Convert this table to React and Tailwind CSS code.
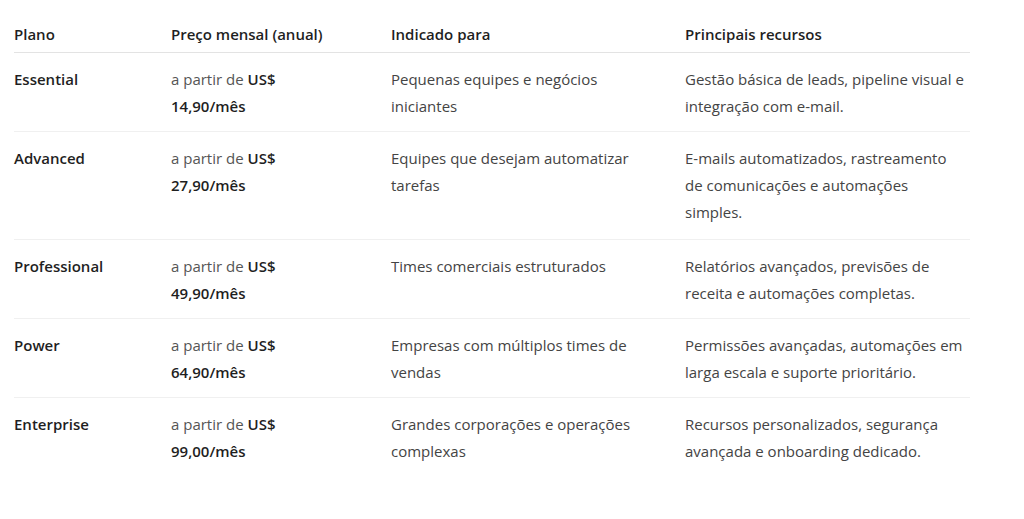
import React from "react";

const plans = [
  {
    name: "Essential",
    price: "14,90/mês",
    target: ["Pequenas equipes e negócios", "iniciantes"],
    features: ["Gestão básica de leads, pipeline visual e", "integração com e-mail."],
  },
  {
    name: "Advanced",
    price: "27,90/mês",
    target: ["Equipes que desejam automatizar", "tarefas"],
    features: [
      "E-mails automatizados, rastreamento",
      "de comunicações e automações",
      "simples.",
    ],
  },
  {
    name: "Professional",
    price: "49,90/mês",
    target: ["Times comerciais estruturados"],
    features: ["Relatórios avançados, previsões de", "receita e automações completas."],
  },
  {
    name: "Power",
    price: "64,90/mês",
    target: ["Empresas com múltiplos times de", "vendas"],
    features: [
      "Permissões avançadas, automações em",
      "larga escala e suporte prioritário.",
    ],
  },
  {
    name: "Enterprise",
    price: "99,00/mês",
    target: ["Grandes corporações e operações", "complexas"],
    features: [
      "Recursos personalizados, segurança",
      "avançada e onboarding dedicado.",
    ],
  },
];

const App = () => {
  return (
    <div
      className="w-[1024px] h-[519px] bg-white pl-[14px] overflow-hidden"
      style={{ fontFamily: '"Open Sans", "Noto Sans", sans-serif' }}
    >
      <table className="w-[956px] table-fixed border-collapse text-left text-[15px] leading-[27px] text-[#444]">
        <colgroup>
          <col className="w-[157px]" />
          <col className="w-[220px]" />
          <col className="w-[294px]" />
          <col className="w-[285px]" />
        </colgroup>
        <thead>
          <tr className="border-b border-[#e3e3e3]">
            <TableHead>Plano</TableHead>
            <TableHead>Preço mensal (anual)</TableHead>
            <TableHead>Indicado para</TableHead>
            <TableHead>Principais recursos</TableHead>
          </tr>
        </thead>
        <tbody>
          {plans.map((p, i) => (
            <tr
              key={p.name}
              className={`${
                i < plans.length - 1 ? "border-b border-[#f0f0f0]" : ""
              } [&>td]:align-top [&>td]:pt-[13px] ${
                p.features.length > 2 ? "[&>td]:pb-[13px]" : "[&>td]:pb-[11px]"
              }`}
            >
              <td className="font-semibold text-[#1f1f1f]">{p.name}</td>
              <td>
                <span className="block whitespace-nowrap">
                  <span className="text-[#555]">a partir de </span>
                  <span className="font-semibold text-[#1f1f1f]">US$</span>
                </span>
                <span className="block font-semibold text-[#1f1f1f]">
                  {p.price}
                </span>
              </td>
              <td>
                <Lines lines={p.target} />
              </td>
              <td>
                <Lines lines={p.features} />
              </td>
            </tr>
          ))}
        </tbody>
      </table>
    </div>
  );
};

export default App;

const TableHead = ({ children }) => (
  <th className="pt-[21px] pb-[4px] font-semibold text-[#1f1f1f]">
    {children}
  </th>
);

const Lines = ({ lines }) =>
  lines.map((l) => (
    <span key={l} className="block whitespace-nowrap">
      {l}
    </span>
  ));
